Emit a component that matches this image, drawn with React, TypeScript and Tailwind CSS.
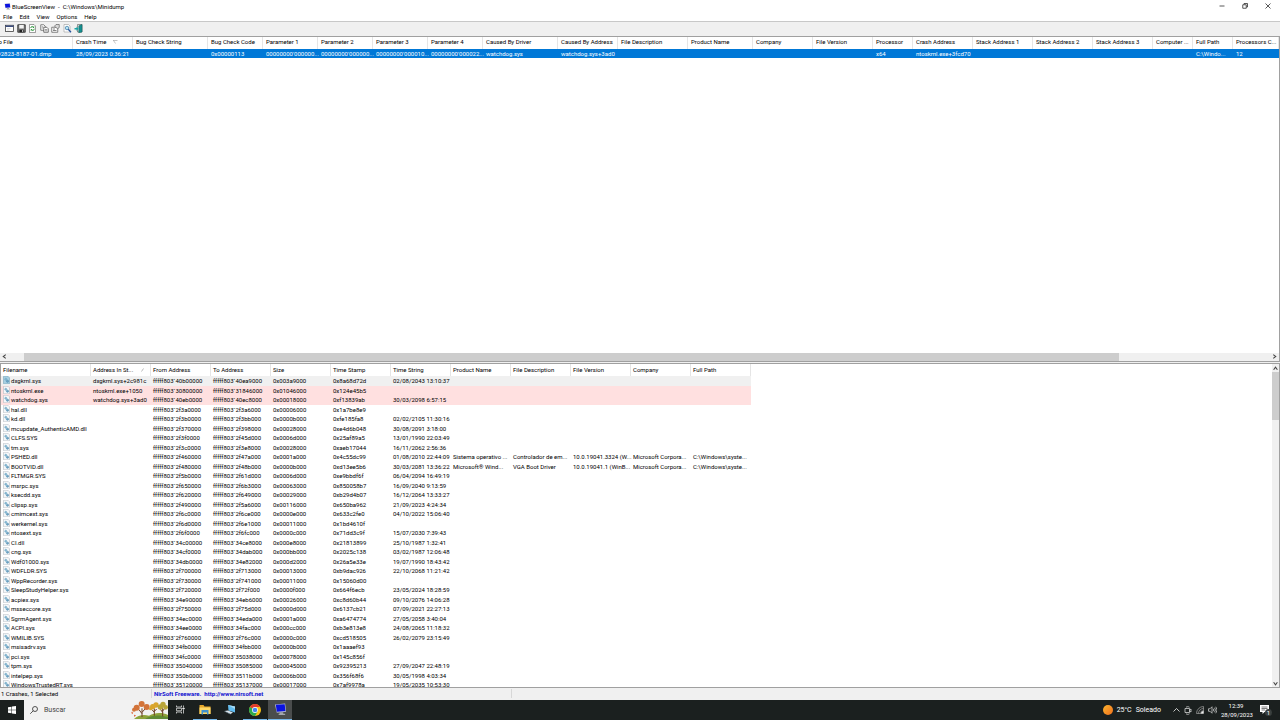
import { useState } from "react";
import type { ReactNode } from "react";

const MENU = ["File", "Edit", "View", "Options", "Help"];

const CRASH_COLUMNS = [
  { label: "Dump File", width: "w-[90px]" },
  { label: "Crash Time", width: "w-[60px]" },
  { label: "Bug Check String", width: "w-[75px]" },
  { label: "Bug Check Code", width: "w-[55px]" },
  { label: "Parameter 1", width: "w-[55px]" },
  { label: "Parameter 2", width: "w-[55px]" },
  { label: "Parameter 3", width: "w-[55px]" },
  { label: "Parameter 4", width: "w-[55px]" },
  { label: "Caused By Driver", width: "w-[75px]" },
  { label: "Caused By Address", width: "w-[60px]" },
  { label: "File Description", width: "w-[70px]" },
  { label: "Product Name", width: "w-[65px]" },
  { label: "Company", width: "w-[60px]" },
  { label: "File Version", width: "w-[60px]" },
  { label: "Processor", width: "w-[40px]" },
  { label: "Crash Address", width: "w-[60px]" },
  { label: "Stack Address 1", width: "w-[60px]" },
  { label: "Stack Address 2", width: "w-[60px]" },
  { label: "Stack Address 3", width: "w-[60px]" },
  { label: "Computer ...", width: "w-[40px]" },
  { label: "Full Path", width: "w-[40px]" },
  { label: "Processors C...", width: "w-auto" },
];

const CRASH = [
  "092823-8187-01.dmp", "28/09/2023 0:36:21", "", "0x00000113",
  "00000000'000000...", "00000000'000000...", "00000000'000010...", "00000000'000022...",
  "watchdog.sys", "watchdog.sys+3ad0", "", "", "", "", "x64", "ntoskrnl.exe+3fcd70",
  "", "", "", "", "C:\\Windo...", "12",
];

const DRIVER_COLUMNS = [
  "Filename", "Address In St...", "From Address", "To Address", "Size", "Time Stamp",
  "Time String", "Product Name", "File Description", "File Version", "Company", "Full Path",
];

const DRIVERS: string[][] = [
  ["dxgkrnl.sys", "dxgkrnl.sys+2c981c", "fffff803`40b00000", "fffff803`40ea9000", "0x003a9000", "0x8a68d72d", "02/08/2043 13:10:37"],
  ["ntoskrnl.exe", "ntoskrnl.exe+1050", "fffff803`30800000", "fffff803`31846000", "0x01046000", "0x124e45b5", ""],
  ["watchdog.sys", "watchdog.sys+3ad0", "fffff803`40eb0000", "fffff803`40ec8000", "0x00018000", "0xf13839ab", "30/03/2098 6:57:15"],
  ["hal.dll", "", "fffff803`2f3a0000", "fffff803`2f3a6000", "0x00006000", "0x1a7be8e9", ""],
  ["kd.dll", "", "fffff803`2f3b0000", "fffff803`2f3bb000", "0x0000b000", "0xfe185fa8", "02/02/2105 11:30:16"],
  ["mcupdate_AuthenticAMD.dll", "", "fffff803`2f370000", "fffff803`2f398000", "0x00028000", "0xe4d6b048", "30/08/2091 3:18:00"],
  ["CLFS.SYS", "", "fffff803`2f3f0000", "fffff803`2f45d000", "0x0006d000", "0x25af89a5", "13/01/1990 22:03:49"],
  ["tm.sys", "", "fffff803`2f3c0000", "fffff803`2f3e8000", "0x00028000", "0xaeb17044", "16/11/2062 2:56:36"],
  ["PSHED.dll", "", "fffff803`2f460000", "fffff803`2f47a000", "0x0001a000", "0x4c55dc99", "01/08/2010 22:44:09", "Sistema operativo ...", "Controlador de em...", "10.0.19041.3324 (W...", "Microsoft Corpora...", "C:\\Windows\\syste..."],
  ["BOOTVID.dll", "", "fffff803`2f480000", "fffff803`2f48b000", "0x0000b000", "0xd13ee5b6", "30/03/2081 13:36:22", "Microsoft® Wind...", "VGA Boot Driver", "10.0.19041.1 (WinB...", "Microsoft Corpora...", "C:\\Windows\\syste..."],
  ["FLTMGR.SYS", "", "fffff803`2f5b0000", "fffff803`2f61d000", "0x0006d000", "0xe9bbdf6f", "06/04/2094 16:49:19"],
  ["msrpc.sys", "", "fffff803`2f650000", "fffff803`2f6b3000", "0x00063000", "0x850058b7", "16/09/2040 9:13:59"],
  ["ksecdd.sys", "", "fffff803`2f620000", "fffff803`2f649000", "0x00029000", "0xb29d4b07", "16/12/2064 13:33:27"],
  ["clipsp.sys", "", "fffff803`2f490000", "fffff803`2f5a6000", "0x00116000", "0x650ba962", "21/09/2023 4:24:34"],
  ["cmimcext.sys", "", "fffff803`2f6c0000", "fffff803`2f6ce000", "0x0000e000", "0x633c2fe0", "04/10/2022 15:06:40"],
  ["werkernel.sys", "", "fffff803`2f6d0000", "fffff803`2f6e1000", "0x00011000", "0x1bd4610f", ""],
  ["ntosext.sys", "", "fffff803`2f6f0000", "fffff803`2f6fc000", "0x0000c000", "0x71dd3c9f", "15/07/2030 7:39:43"],
  ["CI.dll", "", "fffff803`34c00000", "fffff803`34ce8000", "0x000e8000", "0x21813899", "25/10/1987 1:32:41"],
  ["cng.sys", "", "fffff803`34cf0000", "fffff803`34dab000", "0x000bb000", "0x2025c138", "03/02/1987 12:06:48"],
  ["Wdf01000.sys", "", "fffff803`34db0000", "fffff803`34e82000", "0x000d2000", "0x26a5e33e", "19/07/1990 18:43:42"],
  ["WDFLDR.SYS", "", "fffff803`2f700000", "fffff803`2f713000", "0x00013000", "0xb9dac926", "22/10/2068 11:21:42"],
  ["WppRecorder.sys", "", "fffff803`2f730000", "fffff803`2f741000", "0x00011000", "0x15060d00", ""],
  ["SleepStudyHelper.sys", "", "fffff803`2f720000", "fffff803`2f72f000", "0x0000f000", "0x664f6ecb", "23/05/2024 18:28:59"],
  ["acpiex.sys", "", "fffff803`34e90000", "fffff803`34eb6000", "0x00026000", "0xc8d60b44", "09/10/2076 14:06:28"],
  ["msseccore.sys", "", "fffff803`2f750000", "fffff803`2f75d000", "0x0000d000", "0x6137cb21", "07/09/2021 22:27:13"],
  ["SgrmAgent.sys", "", "fffff803`34ec0000", "fffff803`34eda000", "0x0001a000", "0xa6474774", "27/05/2058 3:40:04"],
  ["ACPI.sys", "", "fffff803`34ee0000", "fffff803`34fac000", "0x000cc000", "0xb3e813e8", "24/08/2065 11:18:32"],
  ["WMILIB.SYS", "", "fffff803`2f760000", "fffff803`2f76c000", "0x0000c000", "0xcd518505", "26/02/2079 23:15:49"],
  ["msisadrv.sys", "", "fffff803`34fb0000", "fffff803`34fbb000", "0x0000b000", "0x1aaaef93", ""],
  ["pci.sys", "", "fffff803`34fc0000", "fffff803`35038000", "0x00078000", "0x145c856f", ""],
  ["tpm.sys", "", "fffff803`35040000", "fffff803`35085000", "0x00045000", "0x92395213", "27/09/2047 22:48:19"],
  ["intelpep.sys", "", "fffff803`350b0000", "fffff803`3511b000", "0x0006b000", "0x356f68f6", "30/05/1998 4:03:34"],
  ["WindowsTrustedRT.sys", "", "fffff803`35120000", "fffff803`35137000", "0x00017000", "0x7af9978a", "19/05/2035 10:53:30"],
];

function MonitorIcon({ size }: { size: string }) {
  return (
    <svg viewBox="0 0 14 14" className={size}>
      <path d="M1 1.500 12 .5l1 9-10 1z" fill="#b9bdd0" />
      <path d="M2 2 11.500 1.300 12.300 8.500 3 9.300z" fill="#0a12e0" />
      <path d="M6 10h4v1.500h2V13H5v-1.500h1z" fill="#a3a6ad" />
    </svg>
  );
}

function DriverIcon({ selected }: { selected?: boolean }) {
  return (
    <svg viewBox="0 0 14 16" className="h-2 w-[7px] shrink-0">
      <path d="M1 .5h9l3 3v12H1z" fill={selected ? "#a5cfe2" : "#f4f7f9"} stroke={selected ? "#6b9db5" : "#a9b1b8"} />
      <circle cx="5.500" cy="6.500" r="2" fill="#8dbbd3" stroke="#6fa8c5" strokeWidth="1.200" />
      <circle cx="9" cy="10.500" r="2.200" fill="#6ba3c2" stroke="#4f8cb0" strokeWidth="1.200" />
    </svg>
  );
}

const TOOLS: { label: string; icon: ReactNode }[] = [
  {
    label: "Advanced options",
    icon: (
      <>
        <rect x="1" y="2.500" width="16" height="12.500" fill="#fff" stroke="#333" strokeWidth="1.500" />
        <path d="M1 3h16v3H1z" fill="#3b4d80" />
        <path d="M4 9h7M4 12h5" stroke="#bbb" />
      </>
    ),
  },
  {
    label: "Save",
    icon: (
      <>
        <path d="M1.500 1.500h15v15h-15z" fill="#777" stroke="#222" strokeWidth="1.500" />
        <path d="M4.500 2h9v7h-9z" fill="#f2f2f2" />
        <path d="M5 11.500h8v5H5z" fill="#222" />
        <path d="M10 12.500h2v3h-2z" fill="#ddd" />
      </>
    ),
  },
  {
    label: "Refresh",
    icon: (
      <>
        <path d="M3 1h9l3 3v13H3z" fill="#fff" stroke="#444" />
        <path d="M5.500 8c0-3 4-4 5.500-1.500M12.500 9.500c0 3.500-4 4.500-5.500 2" fill="none" stroke="#178a28" strokeWidth="1.800" />
        <path d="m12.500 4-.3 4-3.400-1zM5.500 14l.3-4 3.400 1z" fill="#178a28" />
      </>
    ),
  },
  {
    label: "Copy",
    icon: (
      <>
        <path d="M1.500 1.500h6l3 3v8h-9z" fill="#fff" stroke="#444" strokeWidth="1.300" />
        <path d="M7.500 6.500h6l3 3v7h-9z" fill="#fff" stroke="#333" strokeWidth="1.300" />
        <path d="M3.500 5.500h3M3.500 8h3M9.500 11h5M9.500 13.500h5" stroke="#444" />
      </>
    ),
  },
  {
    label: "Properties",
    icon: (
      <>
        <path d="M1.500 6.500h12v10h-12z" fill="#fff" stroke="#444" strokeWidth="1.300" />
        <path d="M7 4.500 10 1h6.500v6L13 9.500 10 7z" fill="#d8d8d8" stroke="#333" />
        <path d="M4 10h4M4 13h7" stroke="#444" strokeWidth="1.300" />
      </>
    ),
  },
  {
    label: "Find",
    icon: (
      <>
        <path d="M2 1h9l3 3v12H2z" fill="#fff" stroke="#888" />
        <circle cx="8" cy="8" r="3.500" fill="#b9e3f2" stroke="#286f9e" strokeWidth="1.300" />
        <path d="m10.500 10.500 5.500 6" stroke="#234f9b" strokeWidth="2.500" />
      </>
    ),
  },
  {
    label: "Exit",
    icon: (
      <>
        <path d="M7 1h9v15H7z" fill="#fff" stroke="#333" />
        <path d="m9.500 3.500 6.500-2.500v15l-6.500 1.500z" fill="#159090" stroke="#0c5c5c" />
        <path d="M1 8h4V5l4 4.500L5 14v-3H1z" fill="#18a5a5" />
      </>
    ),
  },
];

function Chevron({ d, label }: { d: string; label: string }) {
  return (
    <button aria-label={label} className="flex size-[7px] shrink-0 items-center justify-center">
      <svg viewBox="0 0 8 8" className="size-[5px]">
        <path d={d} fill="none" stroke="#444" strokeWidth="1.700" />
      </svg>
    </button>
  );
}

function TitleBar() {
  return (
    <header className="flex h-3 shrink-0 items-center bg-white pl-1">
      <MonitorIcon size="size-[7px]" />
      <h1 className="ml-[1px] whitespace-pre">BlueScreenView  -  C:\Windows\Minidump</h1>
      <div className="ml-auto flex h-[10px] text-[#222]">
        <button aria-label="Minimize" className="flex w-[23px] items-center justify-center">
          <svg viewBox="0 0 12 12" className="size-[6px]"><path d="M1 6h10" stroke="currentColor" strokeWidth="1.500" /></svg>
        </button>
        <button aria-label="Restore" className="flex w-[23px] items-center justify-center">
          <svg viewBox="0 0 12 12" className="size-[6px]">
            <path d="M1.500 3.500h7v7h-7zM4 3V1h7v7H9" fill="none" stroke="currentColor" strokeWidth="1.500" />
          </svg>
        </button>
        <button aria-label="Close" className="mr-px flex w-[23px] items-center justify-center">
          <svg viewBox="0 0 12 12" className="size-[6px]"><path d="m1 1 10 10M11 1 1 11" stroke="currentColor" strokeWidth="1.500" /></svg>
        </button>
      </div>
    </header>
  );
}

function CrashPane() {
  return (
    <section className="flex min-h-0 flex-1 flex-col border-t border-r border-b border-[#a0a0a0] bg-white">
      <div className="min-h-0 flex-1 overflow-hidden">
        {/* scrolled a little to the right, so the first column is cut */}
        <table className="-ml-[17px] w-[calc(100%+17px)] table-fixed border-separate border-spacing-0">
          <thead>
            <tr className="h-3">
              {CRASH_COLUMNS.map((c) => (
                <th key={c.label} className={`${c.width} border-r border-[#e5e5e5] p-0 pl-[3px] text-left align-top font-normal whitespace-nowrap`}>
                  <span className="flex items-center">
                    {c.label}
                    {c.label === "Crash Time" && (
                      <svg viewBox="0 0 10 8" className="ml-[7px] h-1 w-[5px]">
                        <path d="M0 1h9M1 1l4 6" fill="none" stroke="#888" />
                      </svg>
                    )}
                  </span>
                </th>
              ))}
            </tr>
          </thead>
          <tbody>
            <tr className="h-[9px] bg-[#0078d7] text-white">
              {CRASH.map((value, i) => (
                <td key={i} className="p-0 pl-[3px] whitespace-nowrap">
                  <span className="flex items-center gap-[1px]">
                    {i === 0 && <DriverIcon />}
                    {value}
                  </span>
                </td>
              ))}
            </tr>
          </tbody>
        </table>
      </div>
      <div className="flex h-2 items-center bg-[#f0f0f0] px-[1px]">
        <Chevron label="Scroll left" d="M6 1 2 4l4 3" />
        <div className="ml-4 h-full flex-[36] bg-[#cdcdcd]" />
        <span className="flex-[5]" />
        <Chevron label="Scroll right" d="m2 1 4 3-4 3" />
      </div>
    </section>
  );
}

function DriverPane() {
  const [selected, setSelected] = useState(0);

  return (
    <section className="mt-px flex min-h-0 flex-1 border border-[#a0a0a0] bg-white">
      <div className="min-w-0 flex-1 overflow-hidden">
        <table className="w-[750px] table-fixed border-separate border-spacing-0">
          <thead>
            <tr className="h-3">
              {DRIVER_COLUMNS.map((label, i) => (
                <th key={label} className={`${i === 0 ? "w-[90px]" : "w-[60px]"} border-r border-[#e5e5e5] p-0 pl-[2px] text-left font-normal whitespace-nowrap`}>
                  <span className="flex items-center">
                    {label}
                    {i === 1 && (
                      <svg viewBox="0 0 6 8" className="ml-2 h-1 w-[3px]">
                        <path d="M1 7 5 1" stroke="#777" />
                      </svg>
                    )}
                  </span>
                </th>
              ))}
            </tr>
          </thead>
          <tbody>
            {DRIVERS.map((row, r) => (
              <tr
                key={row[0]}
                onClick={() => setSelected(r)}
                className={`odd:h-[10px] even:h-[9px] ${selected === r ? "bg-[#f0f0f0]" : row[1] ? "bg-[#ffe0e0]" : ""}`}
              >
                {DRIVER_COLUMNS.map((label, i) => (
                  <td key={label} className="p-0 pl-[2px] align-top whitespace-nowrap">
                    <span className="flex items-center gap-[1px]">
                      {i === 0 && <DriverIcon selected={selected === r} />}
                      {row[i]}
                    </span>
                  </td>
                ))}
              </tr>
            ))}
          </tbody>
        </table>
      </div>
      <div className="flex w-[7px] shrink-0 flex-col bg-[#f0f0f0] pt-px">
        <Chevron label="Scroll up" d="m1 6 3-4 3 4" />
        <div className="h-[15%] bg-[#cdcdcd]" />
        <span className="flex-1" />
        <Chevron label="Scroll down" d="m1 2 3 4 3-4" />
      </div>
    </section>
  );
}

function TreesArt() {
  return (
    <svg viewBox="0 0 114 54" className="h-full w-[38px] shrink-0">
      <path d="M12 54c12-12 28-14 45-10 18-10 40-10 57-2v12z" fill="#8ea33a" />
      <path d="M45 54c16-12 44-14 69-6v6z" fill="#5f8a35" />
      <path d="M36 48V22m0 16-9-12m9 8 10-11M73 44V22m0 12-7-8m7 5 7-7M98 46V20m0 14-7-9m7 5 7-9" stroke="#6e3f24" strokeWidth="3" fill="none" />
      <g fill="#d3743a">
        <circle cx="20" cy="20" r="9" /><circle cx="35" cy="9" r="9" /><circle cx="50" cy="18" r="9" /><circle cx="12" cy="26" r="6" />
      </g>
      <g fill="#d9a52d">
        <circle cx="68" cy="17" r="8" /><circle cx="78" cy="12" r="8" /><circle cx="62" cy="23" r="5" />
      </g>
      <g fill="#b9a53a">
        <circle cx="91" cy="18" r="8" /><circle cx="99" cy="10" r="8" /><circle cx="107" cy="19" r="7" />
      </g>
      <path d="m4 32 6 3-4 5zM12 41l6 2-5 5z" fill="#dc5a2b" />
    </svg>
  );
}

function ChromeIcon() {
  return (
    <svg viewBox="0 0 24 24" className="size-3">
      <circle cx="12" cy="12" r="12" fill="#fbc116" />
      <path d="M12 12 1.600 6A12 12 0 0 1 22.400 6H12z" fill="#e33b2e" />
      <path d="M12 12 1.600 6A12 12 0 0 0 12 24l5.200-9z" fill="#2da94f" />
      <circle cx="12" cy="12" r="5.800" fill="#fff" />
      <circle cx="12" cy="12" r="4.500" fill="#4285f4" />
    </svg>
  );
}

const APPS: { label: string; state: string; icon: ReactNode }[] = [
  {
    label: "Task View",
    state: "border-transparent",
    icon: (
      <svg viewBox="0 0 18 18" className="size-[9px]" fill="none" stroke="#e6e6e6" strokeWidth="1.500">
        <path d="M1 1v3h10V1M1 17v-3h10v3M1 6.500h10v5H1zM15 1v4M15 9v8" />
        <path d="M13.500 6h3v2h-3z" fill="#e6e6e6" />
      </svg>
    ),
  },
  {
    label: "File Explorer",
    state: "border-[#76b9ed]",
    icon: (
      <svg viewBox="0 0 24 22" className="h-[11px] w-3">
        <path d="M1 2h8l2 3h12v15H1z" fill="#e8a92c" />
        <path d="M1 7h22v13H1z" fill="#ffd968" />
        <path d="M5 12h14v9h-3v-4H8v4H5z" fill="#3f93cf" />
      </svg>
    ),
  },
  {
    label: "Remote Desktop",
    state: "border-transparent",
    icon: (
      <svg viewBox="0 0 24 22" className="h-[11px] w-3">
        <path d="m8 2 14 3v12l-13-4z" fill="#62bdf0" />
        <path d="m8 2 14 3v5z" fill="#a8dcf7" />
        <path d="m1 14 7-1 10 4-5 3z" fill="#d7e4ec" />
        <path d="m1 14 12 6v1L1 15z" fill="#7d95a3" />
      </svg>
    ),
  },
  { label: "Google Chrome", state: "border-[#76b9ed]", icon: <ChromeIcon /> },
  { label: "BlueScreenView", state: "border-[#76b9ed] bg-[#4a4d4d]", icon: <MonitorIcon size="size-[13px]" /> },
];

function Taskbar() {
  return (
    <footer className="flex h-5 shrink-0 bg-[#1b201f] text-[7px] text-white">
      <button aria-label="Start" className="flex w-6 items-center justify-center">
        <svg viewBox="0 0 16 16" className="size-2" fill="#fff">
          <path d="M0 2.300 7 1.300v6.200H0zM8 1.200 16 0v7.500H8zM0 8.500h7v6.200l-7-1zM8 8.500h8V16l-8-1.200z" />
        </svg>
      </button>
      <label className="flex w-36 items-center bg-[#f2f2f2] pl-[6px] text-[#444]">
        <svg viewBox="0 0 16 16" className="size-2 shrink-0" fill="none" stroke="#222" strokeWidth="1.500">
          <circle cx="10" cy="6" r="5" />
          <path d="m6.500 9.500-6 6" />
        </svg>
        <input aria-label="Buscar" placeholder="Buscar" className="ml-[6px] w-full min-w-0 bg-transparent outline-none placeholder:text-[#444]" />
        <TreesArt />
      </label>
      <div className="flex gap-px">
        {APPS.map((app) => (
          <button key={app.label} aria-label={app.label} className={`flex w-6 items-center justify-center border-b ${app.state}`}>
            {app.icon}
          </button>
        ))}
      </div>
      <div className="ml-auto flex items-center">
        <button className="flex items-center">
          <svg viewBox="0 0 20 20" className="mr-1 size-[10px]">
            <defs>
              <linearGradient id="sun" x1="0" y1="0" x2="1" y2="1">
                <stop offset="0" stopColor="#fdb62f" />
                <stop offset="1" stopColor="#f0701d" />
              </linearGradient>
            </defs>
            <circle cx="10" cy="10" r="10" fill="url(#sun)" />
          </svg>
          <span>25°C</span>
          <span className="ml-1">Soleado</span>
        </button>
        <div className="ml-3 flex items-center gap-1">
          <svg viewBox="0 0 14 16" className="h-2 w-[7px]" fill="none" stroke="#fff" strokeWidth="1.500"><path d="m1 11 6-6 6 6" /></svg>
          <svg viewBox="0 0 16 18" className="h-[9px] w-2" fill="none" stroke="#ddd" strokeWidth="1.500">
            <path d="M2 5h9v8H2zM11 8l3-2v6l-3-2M4 2.500C6 1 9 1 11 2.500M4 15.500c2 1.500 5 1.500 7 0" />
          </svg>
          <svg viewBox="0 0 16 16" className="size-2" fill="none" stroke="#999" strokeWidth="1.500">
            <path d="M1 15A14 14 0 0 1 15 1v14zM5 15A10 10 0 0 1 15 5M9 15a6 6 0 0 1 6-6" />
            <path d="M10 15a5 5 0 0 1 5-5v5z" fill="#eee" stroke="none" />
          </svg>
          <svg viewBox="0 0 18 16" className="h-2 w-[9px]" fill="none" stroke="#ddd" strokeWidth="1.400">
            <path d="M1 5.500h3l4-4v13l-4-4H1zM10.500 5.500a4 4 0 0 1 0 5M13 3.500a7 7 0 0 1 0 9M15.500 1.500a10 10 0 0 1 0 13" />
          </svg>
        </div>
        <button className="ml-1 w-[30px] text-center text-[6px] leading-[9px]">
          <span className="block">12:39</span>
          <span className="block whitespace-nowrap">28/09/2023</span>
        </button>
        <button aria-label="1 notification" className="relative mr-[9px] ml-2 size-3">
          <svg viewBox="0 0 24 24" className="size-3">
            <path d="M2 2h18v14h-9l-4 4v-4H2z" fill="#fff" />
            <path d="M5 6h12M5 9h12M5 12h7" stroke="#555" strokeWidth="1.500" />
          </svg>
          <span className="absolute -right-px bottom-0 size-[7px] rounded-full bg-[#3a3f3e] text-[6px] leading-[7px]">1</span>
        </button>
      </div>
    </footer>
  );
}

export default function App() {
  return (
    <div className="flex h-screen flex-col overflow-hidden bg-[#f0f0f0] font-['Roboto','Noto_Sans',sans-serif] text-[6px] leading-[9px] text-black">
      <TitleBar />
      <nav className="flex h-[10px] shrink-0 items-center gap-[7px] border-b border-[#c8c8c8] bg-white pl-[3px]">
        {MENU.map((item) => (
          <button key={item}>{item}</button>
        ))}
      </nav>
      <div className="h-[14px] shrink-0 pt-[2px] pl-[5px]">
        <div className="flex w-[78px] justify-between">
          {TOOLS.map((tool) => (
            <button key={tool.label} aria-label={tool.label}>
              <svg viewBox="0 0 18 18" className="size-[9px]">{tool.icon}</svg>
            </button>
          ))}
        </div>
      </div>
      <main className="flex min-h-0 flex-1 flex-col">
        <CrashPane />
        <DriverPane />
      </main>
      <div className="flex h-3 shrink-0 items-start pt-px">
        <p className="w-[152px] border-r border-[#d7d7d7] pl-[1px]">1 Crashes, 1 Selected</p>
        <p className="w-[360px] border-r border-[#d7d7d7] pl-[2px] font-bold whitespace-pre text-[#1010d0]">
          NirSoft Freeware.  <a href="http://www.nirsoft.net">http://www.nirsoft.net</a>
        </p>
      </div>
      <Taskbar />
    </div>
  );
}
